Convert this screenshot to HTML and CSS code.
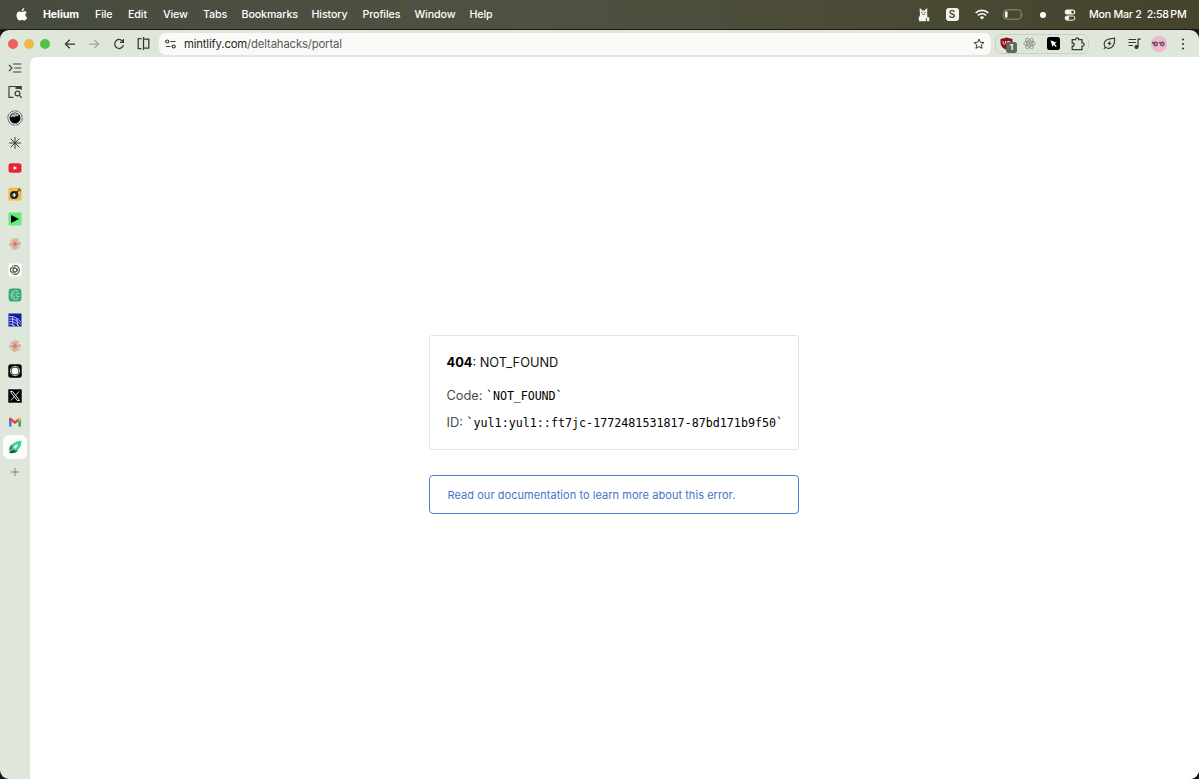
FILE: index.html
```
<!DOCTYPE html>
<html lang="en">
<head>
<meta charset="utf-8">
<title>404: NOT_FOUND</title>
<link rel="stylesheet" href="styles.css">
</head>
<body>
<header class="menubar">
  <svg class="apple" viewBox="0 0 12 14"><path fill="#fff" d="M8.3 0C8.4 1.6 7 3 5.7 2.9 5.6 1.5 7 .1 8.3 0ZM10.7 4.5C8.7 5.7 9 8.4 11.2 9.3 10.7 10.8 9.6 12.6 8.3 12.6 7.4 12.6 7.1 12 6 12 4.900 12 4.600 12.600 3.700 12.600 2.200 12.500.500 9.600.500 7.200.500 4.900 1.900 3.400 3.600 3.400 4.600 3.400 5.300 4 6 4 6.700 4 7.400 3.300 8.700 3.300 9.500 3.400 10.200 3.700 10.700 4.500Z"/></svg>
  <nav class="menus"><b>Helium</b><span>File</span><span>Edit</span><span>View</span><span>Tabs</span><span>Bookmarks</span><span>History</span><span>Profiles</span><span>Window</span><span>Help</span></nav>
  <div class="status">
    <svg width="12" height="14" viewBox="0 0 12 14"><path fill="#f3f3ee" d="M1.600.500 3.200.8 4 2.500H7L7.800.8 9.300.500 9.200 5 9.300 9 11.300 9.500V13.300H9L8.500 11.500 7.500 13.300H1L.6 10 2 7Z"/><path d="M3 4.500H4.500M6.500 4.500H8M4 6.300H7M8.500 10V12" stroke="#4a4b3b" stroke-width=".8"/></svg>
    <span class="s-badge">S</span>
    <svg width="14" height="11" viewBox="0 0 14 11" fill="none" stroke="#fff" stroke-width="1.700"><path d="M.7 4A9 9 0 0 1 13.300 4M3 6.400A5.700 5.700 0 0 1 11 6.400"/><path d="M7 10.500 4.900 8.400A3 3 0 0 1 9.100 8.400Z" fill="#fff" stroke="none"/></svg>
    <svg width="21" height="11" viewBox="0 0 21 11"><rect x=".6" y=".8" width="17.500" height="9.400" rx="2.800" fill="none" stroke="#92937f"/><rect x="2.100" y="2.300" width="2.400" height="6.400" rx="1" fill="#fff"/><path d="M19.300 4V7Q20.400 5.500 19.300 4" fill="#92937f"/></svg>
    <span class="dot"></span>
    <svg width="12" height="12" viewBox="0 0 12 12"><rect x=".7" y=".5" width="10.600" height="5" rx="2.500" fill="#f3f3ee"/><circle cx="8.700" cy="3" r="1.500" fill="#4a4a37"/><rect x="1.100" y="7" width="9.800" height="4.200" rx="2.100" fill="none" stroke="#f3f3ee"/><circle cx="3.200" cy="9.100" r="2.100" fill="#f3f3ee"/></svg>
    <span class="clock">Mon Mar 2&nbsp; 2:58<i>PM</i></span>
  </div>
</header>
<div class="window">
  <div class="toolbar">
    <div class="lights"><i class="red"></i><i class="yellow"></i><i class="green"></i></div>
    <div class="nav">
      <svg viewBox="0 0 12 12"><path d="M11 6H1.500M5.700 1.700 1.400 6 5.700 10.300"/></svg>
      <svg class="off" viewBox="0 0 12 12"><path d="M1 6H10.500M6.300 1.700 10.600 6 6.300 10.300"/></svg>
      <svg viewBox="0 0 12 12"><path d="M10.200 4A4.500 4.500 0 1 0 10.500 7.200M10.400 1V4.400H7"/></svg>
      <svg class="split" viewBox="0 0 13 13"><path d="M4.500 1.500H1.200V11.500H4.500M6.500 0V13M6.500 2H11.800V11H6.500"/></svg>
    </div>
    <div class="address">
      <svg class="tune" viewBox="0 0 11 10"><path d="M0 2.500H2M5.500 2.500H10.500M1 7.500H5.500"/><circle cx="2.300" cy="2.500" r="1.500"/><circle cx="8.700" cy="7.500" r="1.500"/></svg>
      <span class="url">mintlify.com<em>/deltahacks/portal</em></span>
      <svg class="star" viewBox="0 0 12 12"><path d="m6 1.100 1.400 3.200 3.500.3-2.650 2.300.8 3.500L6 8.550 2.950 10.400l.8-3.500L1.100 4.600l3.500-.3Z"/></svg>
    </div>
    <div class="extensions">
      <span class="ublock"><svg viewBox="0 0 13 14"><path fill="#8b1119" d="M6.500.5 12.500 2V6Q12 11 6.500 13 1 11 .5 6V2Z"/><path d="M3 4V6.500Q4.300 8 5.500 6.500V4M7.300 7V4.500H10V7H7.300" fill="none" stroke="#fff" stroke-width=".8"/></svg><b>1</b></span>
      <svg class="atom" viewBox="0 0 14 14"><g fill="none" stroke="#858b84" stroke-width=".9"><ellipse cx="7" cy="7" rx="6.300" ry="2.600"/><ellipse cx="7" cy="7" rx="6.300" ry="2.600" transform="rotate(60 7 7)"/><ellipse cx="7" cy="7" rx="6.300" ry="2.600" transform="rotate(120 7 7)"/></g><circle cx="7" cy="7" r="1.300" fill="#858b84"/></svg>
      <svg class="cursor" viewBox="0 0 13 13"><rect width="13" height="13" rx="2.500"/><path fill="#fff" d="m3.500 3.300 6.300 2.400-2.300 1 2.300 2.300-1 1-2.300-2.300-1 2.200Z"/></svg>
      <svg class="puzzle" viewBox="0 0 14 14"><path d="M1.200 2.700H4.800Q4.700.8 6.300.8T7.800 2.700H11V6Q13.100 5.900 13.100 7.500T11 9V12.500H1.200V9.200Q3.300 9.200 3.300 7.600T1.200 6Z"/></svg>
    </div>
    <div class="tools">
      <svg class="leaf" viewBox="0 0 13 13"><path d="M11.500 1Q12 7 9.400 9.700C7 12.200 3.800 11.600 2.200 9.900.2 7.500 1.200 4.300 3.600 2.900 6 1.400 8 2.400 11.500 1ZM2.200 10 1 12"/><path d="M7.500 3.400 4.200 6.800 6.100 7 5.600 9.200 8.700 6 6.800 5.700Z" fill="#343b33" stroke="none"/></svg>
      <svg class="music" viewBox="0 0 13 12"><path d="M.5 1.500H8M.5 4.500H8M.5 7.500H5M10 9V1.200H12.800"/><circle cx="8.500" cy="9" r="1.500" fill="#343b33"/></svg>
      <svg class="avatar" viewBox="0 0 16 16"><circle cx="8" cy="8" r="8" fill="#f2b7cf"/><circle cx="4.700" cy="8" r="2.400" fill="#6e5468"/><circle cx="11.300" cy="8" r="2.400" fill="#6e5468"/><path d="M1.200 6.300 3 7.500M8 6.500 9.500 7.200" stroke="#332b39"/><circle cx="4.700" cy="8" r=".8" fill="#ddd"/><circle cx="11.300" cy="8" r=".8" fill="#ddd"/></svg>
      <svg class="more" viewBox="0 0 4 14"><circle cx="2" cy="2.500" r="1.100"/><circle cx="2" cy="7" r="1.100"/><circle cx="2" cy="11.500" r="1.100"/></svg>
    </div>
  </div>
  <div class="body">
    <aside class="rail">
      <span><svg class="line" viewBox="0 0 14 14"><path d="M1 4 4 7 1 10M5 3H13.300M6.500 7H13.300M5 11H13.300"/></svg></span>
      <span><svg class="line" viewBox="0 0 14 14"><path d="M5.500 12.300H1V1.500H13V5"/><path d="M7.500 1H13.500V4H7.500Z" fill="#3b4139" stroke="none"/><circle cx="9.500" cy="8.500" r="2.400"/><path d="m11.300 10.300 2.400 2.600"/></svg></span>
      <span><svg class="orb" viewBox="0 0 16 16"><circle cx="8" cy="8" r="7.200" fill="#eef2ee" stroke="#50544f" stroke-width=".9" stroke-dasharray="5 .6"/><circle cx="8" cy="8" r="5.500"/><path d="M3.300 6Q7 .8 12 4.500L11 6.500 9 6 7.500 7.500 6 6.500 4 7.500Z" fill="#a5aaa6"/></svg></span>
      <span><svg class="line thin" viewBox="0 0 14 14"><path d="M7 1V13M1 7H13M2.700 2.700 11.300 11.300M11.300 2.700 2.700 11.300"/></svg></span>
      <span><svg viewBox="0 0 14 14"><rect x=".5" y="2.300" width="13" height="9.400" rx="2.500" fill="#e62337"/><path d="M5.700 5V9L9.200 7Z" fill="#fff"/></svg></span>
      <span><svg viewBox="0 0 14 14"><rect x=".5" y=".7" width="13" height="12.700" rx="1" fill="#f0b944"/><circle cx="6.200" cy="8" r="4.100" fill="#20231f"/><path d="M8.500 5.500 10.200 3.800M10.300 3 11.500 1.800M11.700 4 12.800 3.200" stroke="#20231f" stroke-width="1.200"/><path d="M6.200 6V10M4.200 8H8.200" stroke="#fff" stroke-width="1.200"/></svg></span>
      <span><svg viewBox="0 0 14 14"><rect x=".5" y=".5" width="13" height="13" rx="1" fill="#63ee79"/><path d="M3 3V11L11 7Z"/></svg></span>
      <span><svg class="burst" viewBox="0 0 14 14"><path d="M7 1V13M1.200 6.400 12.800 7.600M2.300 3.300 11.700 10.700M11.300 2.500 2.700 11.500M4.300 1.700 9.700 12.300M9 1.300 5 12.700M12.800 5.500 1.200 8.700"/></svg></span>
      <span><svg viewBox="0 0 14 14"><rect x=".5" y=".5" width="13" height="13" rx="2.500" fill="#fff"/><g fill="none" stroke="#343434" stroke-width=".7"><rect x="4.900" y="2.300" width="4.200" height="6.500" rx="2.100" transform="rotate(30 7 7)"/><rect x="4.900" y="2.300" width="4.200" height="6.500" rx="2.100" transform="rotate(150 7 7)"/><rect x="4.900" y="2.300" width="4.200" height="6.500" rx="2.100" transform="rotate(270 7 7)"/><circle cx="7" cy="7" r="4.500"/></g></svg></span>
      <span><svg viewBox="0 0 14 14"><rect x=".6" y=".6" width="12.800" height="12.800" rx="3" fill="#37a77e"/><path d="M10.500 3.700A4.600 4.300 0 1 0 10.500 10.300M11.500 5.500H9.500A1.500 1.500 0 0 0 9.500 8.500H11.500M7 5.200A1.900 1.900 0 1 0 7 8.800" fill="none" stroke="#c5e7d9" stroke-width=".8"/></svg></span>
      <span><svg viewBox="0 0 14 14"><rect x=".5" y=".5" width="13" height="13" fill="#1719ab"/><path d="M1 3.500Q7 2.500 13 9M1 6Q7 5 13 11.500M1 8.500Q6 7.500 11 13M1 11Q4 10.500 7 13M4.500 3.500 5 13M8.500 5 10 13" fill="none" stroke="#d8def3" stroke-width=".8"/></svg></span>
      <span><svg class="burst" viewBox="0 0 14 14"><path d="M7 1V13M1.200 6.400 12.800 7.600M2.300 3.300 11.700 10.700M11.300 2.500 2.700 11.500M4.300 1.700 9.700 12.300M9 1.300 5 12.700M12.800 5.500 1.200 8.700"/></svg></span>
      <span><svg viewBox="0 0 14 14"><rect x=".3" y=".3" width="13.400" height="13.400" rx="2.500"/><circle cx="7" cy="7" r="3.500" fill="#fff"/><circle cx="7" cy="7" r="4.700" fill="none" stroke="#fff" stroke-width=".8"/></svg></span>
      <span><svg viewBox="0 0 14 14"><rect x=".3" y=".3" width="13.400" height="13.400"/><path d="M2.400 2.500H4.700L11.500 11.500H9.200ZM11 2.500 7.600 6.300M6.300 7.700 2.800 11.500" fill="none" stroke="#fff" stroke-width=".9"/></svg></span>
      <span><svg viewBox="0 0 14 14"><path d="M1 11.500V4L3.700 6V11.500Z" fill="#4185ed"/><path d="M10.300 6 13 4V11.500H10.300Z" fill="#36a867"/><path d="M1 5V3.500Q1.500 2 3 3L7 6 11 3V6L7 9 3.500 6.500Z" fill="#dd4638"/><path d="M10.300 3.500Q12.500 1.800 13 3.500V5L10.300 7Z" fill="#f1b92d"/></svg></span>
      <span class="active"><svg viewBox="0 0 14 14"><path d="M5 3.800Q8 .8 13.500.8 13.500 6.500 10.200 9.400 6.500 12 4.800 9.100 3.200 6 5 3.800Z" fill="#3bd391"/><path d="M5 3.800Q.7 6 1 11.500C2.500 9 5 9.500 4.800 9.100 3.200 6.300 5 3.800 5 3.800" fill="#1b9465"/><path d="M1 12.500Q3 9.600 5 9.500 7.500 11.400 10.200 9.400 8 13.600 3 13.200Z" fill="#245b48"/><path d="M6 6.200Q7.700 4.300 9.800 4.300 9.800 6.700 8 8.200 6.400 8.800 6 7.800Z" fill="#e5faf0"/></svg></span>
      <span><svg class="plus" viewBox="0 0 14 14"><path d="M7 3V11M3 7H11"/></svg></span>
    </aside>
    <main class="page">
      <section class="error-card">
        <p class="title"><strong>404</strong>: NOT_FOUND</p>
        <p>Code: <code class="code-name">`NOT_FOUND`</code></p>
        <p>ID: <code>`yul1:yul1::ft7jc-1772481531817-87bd171b9f50`</code></p>
      </section>
      <a class="docs">Read our documentation to learn more about this error.</a>
    </main>
  </div>
</div>
</body>
</html>
```
FILE: styles.css
```
* { box-sizing: border-box; }
body {
  margin: 0;
  width: 1199px;
  height: 779px;
  overflow: hidden;
  display: flex;
  flex-direction: column;
  background: #171a14;
  font-family: Inter, "Liberation Sans", sans-serif;
}
svg { display: block; flex: none; }
.menubar {
  height: 29px;
  margin-bottom: 1px;
  padding: 0 13px 0 16px;
  display: flex;
  align-items: center;
  background: linear-gradient(90deg, #474b3f, #505141 45%, #45432b);
  color: #fff;
  font-size: 10.7px;
  font-weight: 500;
}
.apple { width: 12px; height: 14px; margin-right: 15px; }
.menus {
  display: grid;
  grid-template-columns: 52px 33px 35px 40px 38.500px 70px 51px 52px 55px 40px;
  letter-spacing: -.12px;
  white-space: nowrap;
}
.menus b { font-weight: 700; }
.status { display: flex; align-items: center; margin-left: auto; }
.status > * { flex: none; }
.s-badge {
  width: 13px; height: 13px; margin: 0 16px;
  border-radius: 3px; background: #f3f3ee; color: #44432d;
  text-align: center; line-height: 13px; font-size: 10px; font-weight: 600;
}
.status svg:nth-of-type(2) { margin-right: 14.500px; }
.dot { width: 6px; height: 6px; margin: 0 18px 0 16px; border-radius: 50%; background: #fff; }
.clock { width: 97px; margin-left: 13px; white-space: pre; letter-spacing: -.26px; }
.clock i { font-style: normal; margin-left: 1.500px; }
.window {
  flex: 1;
  display: flex;
  flex-direction: column;
  background: #dfe6da;
  border-radius: 9px;
  overflow: hidden;
}
.toolbar { height: 27px; display: flex; align-items: center; padding-left: 8px; }
.lights { display: flex; gap: 6px; }
.lights i { width: 10px; height: 10px; border-radius: 50%; }
.red { background: #ed6359; }
.yellow { background: #f2b748; }
.green { background: #55c04b; }
.nav {
  display: flex; align-items: center; gap: 12.300px; margin-left: 14px;
  fill: none; stroke: #343b33; stroke-width: 1.250;
}
.nav svg { width: 12px; height: 12px; }
.nav .off { stroke: #a3aaa0; }
.nav .split { width: 13px; height: 13px; }
.address {
  width: 832px; height: 22px; margin-left: 9px; padding: 0 6px 0 6px;
  display: flex; align-items: center;
  border-radius: 7px; background: #faf9f8;
}
.tune { width: 11px; height: 10px; margin-right: 8px; fill: #faf9f8; stroke: #343b33; stroke-width: 1.200; }
.url { color: #242724; font-size: 11.300px; line-height: 16px; letter-spacing: -.14px; }
.url em { font-style: normal; color: #555854; }
.star { width: 12px; height: 12px; margin-left: auto; fill: none; stroke: #343b33; }
.extensions {
  width: 94px; height: 20px; margin-left: 4px; padding-left: 4px;
  display: flex; align-items: center;
  border: 1px solid #c9d1c5; border-radius: 7px;
}
.ublock { width: 23px; height: 14px; position: relative; }
.ublock svg { width: 13px; height: 14px; }
.ublock b {
  position: absolute; left: 6px; top: 5px; width: 11px; height: 11px;
  border-radius: 2.500px; background: #606963; color: #fff;
  font-size: 8px; line-height: 11px; text-align: center;
}
.atom { width: 13px; height: 13px; margin-right: 11px; }
.cursor { width: 13px; height: 13px; margin-right: 11px; }
.puzzle { width: 14px; height: 14px; fill: none; stroke: #343b33; stroke-width: 1.250; }
.tools { display: flex; align-items: center; margin-left: 14.500px; fill: none; stroke: #343b33; stroke-width: 1.200; }
.leaf { width: 13px; height: 13px; }
.music { width: 13px; height: 12px; margin-left: 12px; }
.avatar { width: 16px; height: 16px; margin-left: 9.500px; stroke: none; }
.more { width: 4px; height: 14px; margin-left: 14px; fill: #343b33; stroke: none; }
.body { flex: 1; display: flex; min-height: 0; }
.rail { width: 30px; display: flex; flex-direction: column; align-items: center; }
.rail span { width: 24px; height: 25.330px; flex: none; display: grid; place-items: center; }
.rail span:first-child { height: 22.700px; }
.rail svg { width: 14px; height: 14px; }
.rail .line { fill: none; stroke: #3b4139; stroke-width: 1.200; }
.rail .thin { stroke-width: 1; }
.rail .orb { width: 16px; height: 16px; }
.rail .burst { stroke: #d2785c; stroke-width: .8; }
.rail .plus { stroke: #7d857a; stroke-width: 1; }
.rail .active { height: 24px; margin: .67px 0; border-radius: 6px; background: #fcfdfb; }
.page {
  flex: 1; padding: 278px 1px 0 0;
  display: flex; flex-direction: column; align-items: center;
  background: #fff; border-top-left-radius: 7px;
}
.error-card {
  width: 370px; height: 115px; padding: 18px 16px 16px 16.500px;
  border: 1px solid #e3e3e3; border-radius: 3px;
  color: #4b4b4b; font-size: 12.800px;
}
.error-card p { margin: 0; line-height: 18px; height: 27px; white-space: nowrap; }
.error-card .title { height: 33px; color: #111; }
.error-card strong { font-weight: 700; color: #000; }
code { color: #000; font: 11.690px "DejaVu Sans Mono", monospace; }
.code-name { letter-spacing: -.1px; }
.docs {
  width: 370px; height: 39px; margin-top: 25px; padding: 0 17.500px;
  display: flex; align-items: center;
  border: 1px solid #4c80d5; border-radius: 4px;
  color: #4774c9; font-size: 11px; letter-spacing: .05px;
}
```
